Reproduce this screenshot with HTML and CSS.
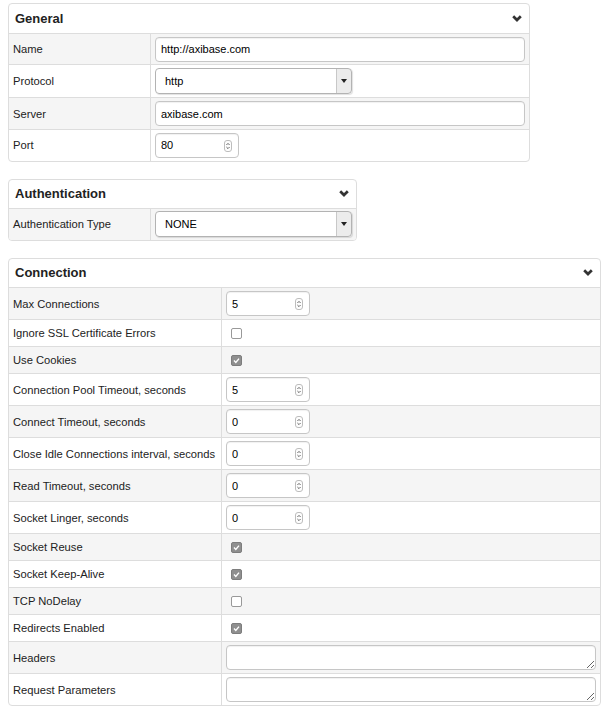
FILE: index.html
```html
<!doctype html>
<html lang="en">
  <head>
    <meta charset="UTF-8" />
    <meta name="viewport" content="width=device-width, initial-scale=1.0" />
    <title>Connection Settings</title>
    <link rel="stylesheet" href="styles.css">
  </head>
  <body>
    <div class="panel panel-general">
      <div class="panel-heading">
        <span>General</span>
        <svg class="chevron" width="10" height="7" viewBox="0 0 10 7"><path d="M1.2 1.2 L5 5 L8.8 1.2" /></svg>
      </div>
      <table class="props">
        <tr>
          <td class="label">Name</td>
          <td><input class="field" type="text" value="http://axibase.com"></td>
        </tr>
        <tr>
          <td class="label">Protocol</td>
          <td><span class="select"><select><option>http</option><option>https</option></select></span></td>
        </tr>
        <tr>
          <td class="label">Server</td>
          <td><input class="field" type="text" value="axibase.com"></td>
        </tr>
        <tr>
          <td class="label">Port</td>
          <td><span class="num"><input class="field" type="text" value="80"><svg class="spin" width="8" height="12" viewBox="0 0 8 12"><rect x="0.5" y="0.5" width="7" height="11" rx="2.5" /><path d="M2.4 5 L4 3.4 L5.6 5 M2.4 7 L4 8.6 L5.6 7" /></svg></span></td>
        </tr>
      </table>
    </div>

    <div class="panel panel-auth">
      <div class="panel-heading">
        <span>Authentication</span>
        <svg class="chevron" width="10" height="7" viewBox="0 0 10 7"><path d="M1.2 1.2 L5 5 L8.8 1.2" /></svg>
      </div>
      <table class="props">
        <tr>
          <td class="label">Authentication Type</td>
          <td><span class="select wide"><select><option>NONE</option><option>BASIC</option></select></span></td>
        </tr>
      </table>
    </div>

    <div class="panel panel-connection">
      <div class="panel-heading">
        <span>Connection</span>
        <svg class="chevron" width="10" height="7" viewBox="0 0 10 7"><path d="M1.2 1.2 L5 5 L8.8 1.2" /></svg>
      </div>
      <table class="props" id="connection"></table>
    </div>

    <script>
      const rows = [
        ['Max Connections', 'num', '5'],
        ['Ignore SSL Certificate Errors', 'check', false],
        ['Use Cookies', 'check', true],
        ['Connection Pool Timeout, seconds', 'num', '5'],
        ['Connect Timeout, seconds', 'num', '0'],
        ['Close Idle Connections interval, seconds', 'num', '0'],
        ['Read Timeout, seconds', 'num', '0'],
        ['Socket Linger, seconds', 'num', '0'],
        ['Socket Reuse', 'check', true],
        ['Socket Keep-Alive', 'check', true],
        ['TCP NoDelay', 'check', false],
        ['Redirects Enabled', 'check', true],
        ['Headers', 'text', ''],
        ['Request Parameters', 'text', '']
      ];

      const spinSvg =
        '<svg class="spin" width="8" height="12" viewBox="0 0 8 12"><rect x="0.5" y="0.5" width="7" height="11" rx="2.5" />' +
        '<path d="M2.4 5 L4 3.4 L5.6 5 M2.4 7 L4 8.6 L5.6 7" /></svg>';
      const tickSvg =
        '<svg width="9" height="9" viewBox="0 0 9 9"><path d="M2 4.6 L3.8 6.4 L7 2.6" /></svg>';

      const table = document.getElementById('connection');
      rows.forEach(([label, type, value]) => {
        const tr = document.createElement('tr');
        let cell = '';
        if (type === 'num') {
          cell = `<span class="num"><input class="field" type="text" value="${value}">${spinSvg}</span>`;
        } else if (type === 'check') {
          tr.className = 'check-row';
          cell = `<span class="checkbox${value ? ' checked' : ''}">${value ? tickSvg : ''}</span>`;
        } else {
          cell = '<textarea class="field area" rows="1"></textarea>';
        }
        tr.innerHTML = `<td class="label">${label}</td><td>${cell}</td>`;
        table.appendChild(tr);
      });
    </script>
  </body>
</html>
```

FILE: styles.css
```css
* {
  box-sizing: border-box;
}
body {
  margin: 0;
  padding: 3px 8px;
  font-family: "Liberation Sans", Arial, Helvetica, sans-serif;
  font-size: 11px;
  color: #333;
  background: #fff;
}
.panel {
  border: 1px solid #ddd;
  border-radius: 4px;
  margin-bottom: 17px;
  overflow: hidden;
  background: #fff;
}
.panel-general {
  width: 522px;
}
.panel-auth {
  width: 349px;
}
.panel-connection {
  width: 593px;
}
.panel-heading {
  display: flex;
  justify-content: space-between;
  align-items: center;
  height: 29.5px;
  padding: 0 7px 0 6px;
  border-bottom: 1px solid #ddd;
  font-size: 13px;
  font-weight: bold;
  color: #222;
}
.panel-auth .panel-heading {
  height: 29px;
}
.chevron path {
  fill: none;
  stroke: #333;
  stroke-width: 2.7;
}
.props {
  width: 100%;
  border-spacing: 0;
  table-layout: fixed;
}
.props td {
  padding: 3px 4px;
  line-height: 18px;
  border-bottom: 1px solid #ddd;
  vertical-align: middle;
}
.props tr:last-child td {
  border-bottom: none;
}
.props tr:nth-child(odd) td {
  background: #f5f5f5;
}
.props td.label {
  width: 142px;
  border-right: 1px solid #ddd;
  white-space: nowrap;
  font-size: 11.2px;
  color: #222;
}
.panel-general .props td {
  padding-bottom: 2.75px;
}
.panel-auth .props td {
  padding: 2.5px 4px;
}
.panel-connection td.label {
  width: 213px;
}
.props tr.check-row td {
  padding-top: 4px;
  padding-bottom: 4px;
}
.field {
  display: block;
  width: 100%;
  height: 25px;
  padding: 0 5px;
  border: 1px solid #c6c6c6;
  border-radius: 4px;
  font-family: inherit;
  font-size: 11px;
  color: #000;
  background: #fff;
  box-shadow: inset 0 1px 1px rgba(0, 0, 0, 0.06);
}
.area {
  resize: both;
  padding: 4px 5px;
}
.num {
  position: relative;
  display: block;
  width: 84px;
}
.spin {
  position: absolute;
  right: 7px;
  top: 7px;
}
.spin rect {
  fill: #fdfdfd;
  stroke: #bdbdbd;
}
.spin path {
  fill: none;
  stroke: #555;
  stroke-width: 0.9;
}
.select {
  position: relative;
  display: block;
  width: 197px;
}
.select select {
  appearance: none;
  -webkit-appearance: none;
  display: block;
  width: 100%;
  height: 26px;
  padding: 0 20px 0 9px;
  border: 1px solid #b3b3b3;
  border-radius: 4px;
  font-family: inherit;
  font-size: 11px;
  color: #000;
  background: linear-gradient(
    to right,
    #fff calc(100% - 15px),
    #c8c8c8 calc(100% - 15px),
    #c8c8c8 calc(100% - 14px),
    #ececec calc(100% - 14px)
  );
  box-shadow: 1px 1px 1px rgba(0, 0, 0, 0.12);
}
.select::after {
  content: "";
  position: absolute;
  right: 5px;
  top: 11px;
  border-left: 3px solid transparent;
  border-right: 3px solid transparent;
  border-top: 4px solid #222;
  pointer-events: none;
}
.checkbox {
  display: block;
  width: 11px;
  height: 11px;
  margin-left: 5px;
  border: 1px solid #999;
  border-radius: 2px;
  background: #fff;
}
.checkbox.checked {
  background: #8f8f8f;
  border-color: #7d7d7d;
}
.checkbox svg {
  display: block;
  margin: 0;
}
.checkbox path {
  fill: none;
  stroke: #fff;
  stroke-width: 1.4;
}
```
